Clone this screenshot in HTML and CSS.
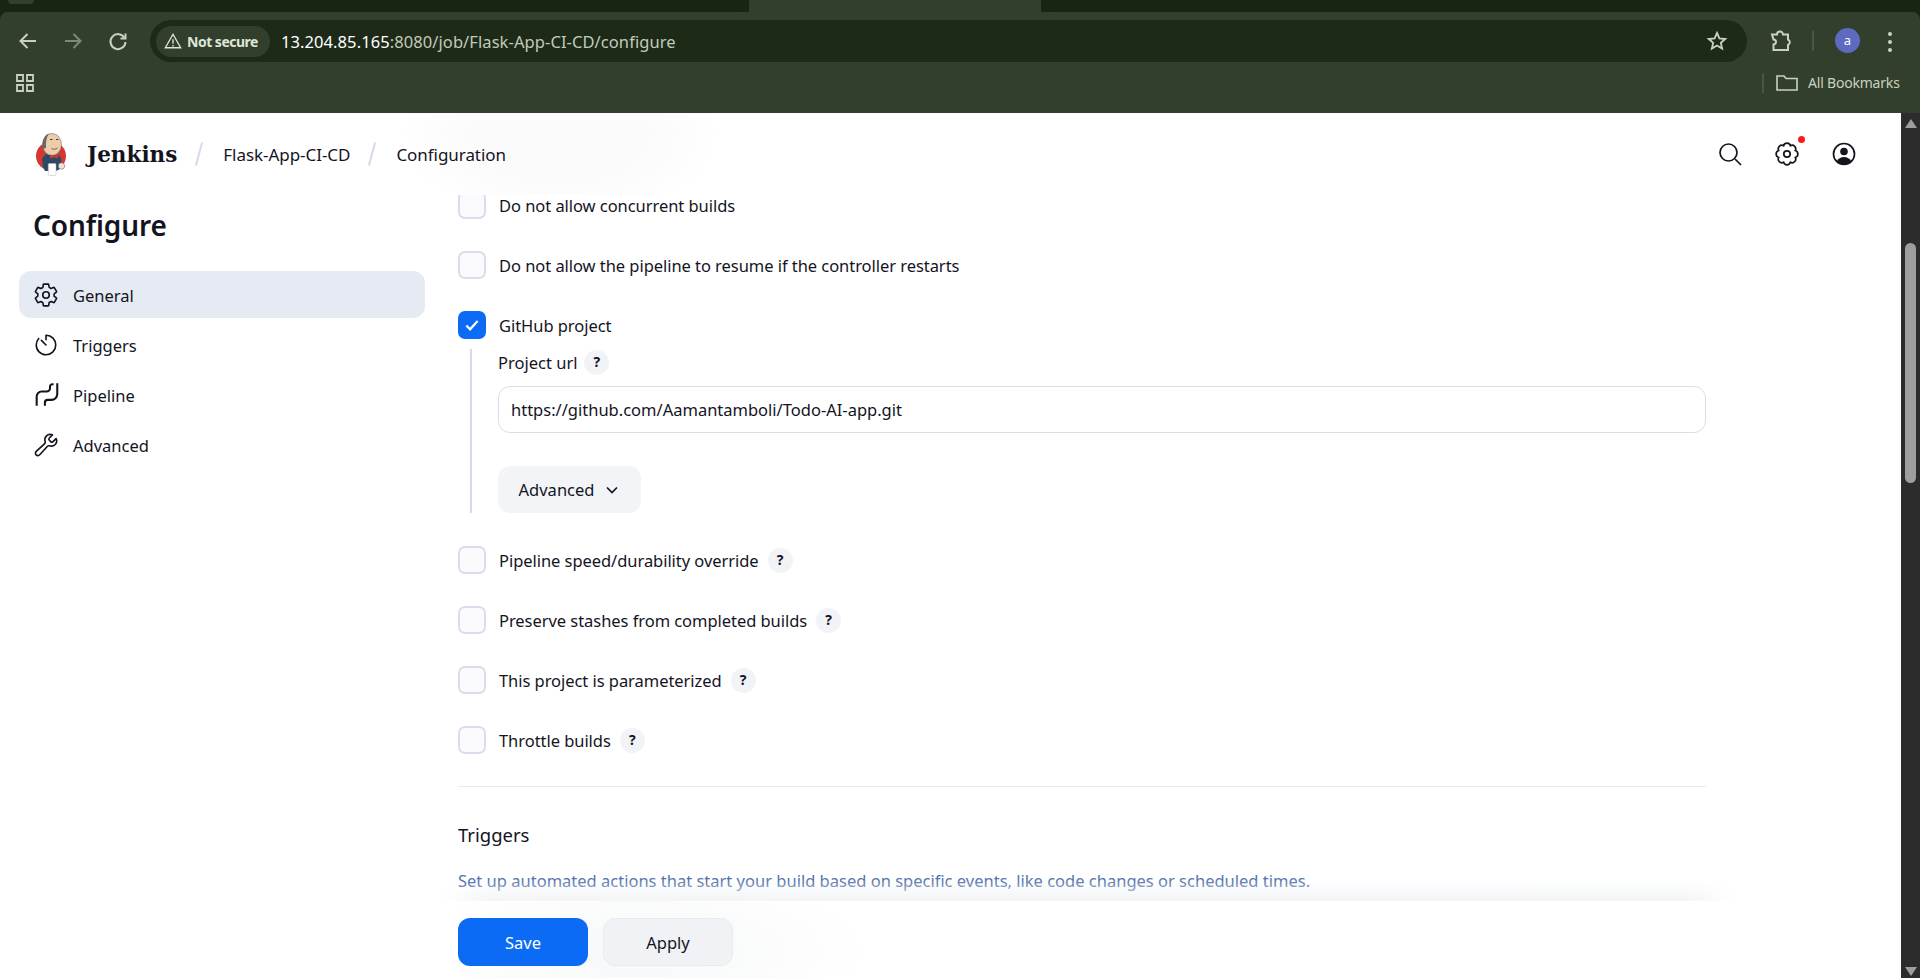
FILE: index.html
```html
<!DOCTYPE html>
<html lang="en">
<head>
    <meta charset="UTF-8">
    <meta name="viewport" content="width=device-width, initial-scale=1.0">
    <title>Flask-App-CI-CD Config [Jenkins]</title>
    <link rel="stylesheet" href="styles.css">
</head>
<body>
    <div class="window">
        <div class="tabstrip">
            <div class="tab-dark tab-left"><div class="tab-stub"></div></div>
            <div class="tab-active"></div>
            <div class="tab-dark tab-right"></div>
        </div>

        <div class="chrome">
            <div class="toolbar">
                <svg class="tool-icon" viewBox="0 0 24 24"><path d="M20 12H5M11.5 5L4.5 12l7 7"/></svg>
                <svg class="tool-icon dim" viewBox="0 0 24 24"><path d="M4 12h15M12.5 5l7 7-7 7"/></svg>
                <svg class="tool-icon" viewBox="0 0 24 24"><path d="M18.6 9A7.5 7.5 0 1 0 19.5 13"/><path d="M19.5 4.5V9.5H14.5"/></svg>
                <div class="omnibox">
                    <div class="secure-pill">
                        <svg class="warn-icon" viewBox="0 0 20 20"><path d="M10 2.5L18.5 17.5H1.5zM10 8v5M10 14.5v1.5"/></svg>
                        <span>Not secure</span>
                    </div>
                    <div class="url"><span class="url-host">13.204.85.165</span>:8080/job/Flask-App-CI-CD/configure</div>
                    <svg class="star-icon" viewBox="0 0 24 24"><path d="M12 3.2l2.6 6 6.4.6-4.8 4.2 1.4 6.3-5.6-3.3-5.6 3.3 1.4-6.3L3 9.8l6.4-.6z"/></svg>
                </div>
                <svg class="puzzle-icon" viewBox="0 0 24 24"><path d="M3 5.5h5a3 3 0 0 1 6 0h5v5a3 3 0 0 1 0 5.500v5H4.500v-5.500a2.500 2.500 0 0 0 0-5z"/></svg>
                <div class="tool-sep"></div>
                <div class="avatar">a</div>
                <div class="dots"><i></i><i></i><i></i></div>
            </div>
            <div class="bookmarks">
                <svg class="apps-icon" viewBox="0 0 18 18"><path d="M1 1h6v6H1zM11 1h6v6h-6zM1 11h6v6H1zM11 11h6v6h-6z"/></svg>
                <div class="tool-sep book-sep"></div>
                <svg class="folder-icon" viewBox="0 0 22 16"><path d="M1 1h7l2 2.500h11V15H1z"/></svg>
                <span class="all-bookmarks">All Bookmarks</span>
            </div>
        </div>

        <div class="viewport">
            <div class="page">
                <header class="app-bar">
                    <!-- Jenkins butler, simplified -->
                    <svg class="logo" viewBox="0 0 31 44">
                        <ellipse cx="16" cy="24" rx="15" ry="14.500" fill="#d33833"/>
                        <path d="M7 27c2-4 5-6 9-6s8 2 10 5l1 10-6 3H10l-2-4z" fill="#2c4a63"/>
                        <ellipse cx="17" cy="12.500" rx="9.500" ry="11" fill="#eccdab" stroke="#5a5560" stroke-width=".5"/>
                        <path d="M7.800 17C6.500 9 9.500 3 14 1.600 11.500 5 10.500 10 11 16z" fill="#6a666c"/>
                        <path d="M15 7.500h2.500M21 7.500h2.500" stroke="#4a3d38" stroke-width="1" fill="none"/>
                        <path d="M16.500 16.500c2 1 4 1 6-.5" stroke="#8c5a4a" stroke-width="1" fill="none"/>
                        <path d="M15 22.500l4 1.500 4-1.700v4l-4-1-4 1.200z" fill="#d33833"/>
                        <rect x="13.300" y="31.500" width="7.700" height="12" rx="1" fill="#fff" stroke="#bbb" stroke-width=".5"/>
                        <circle cx="26.500" cy="34" r="3.200" fill="#f4e3cf" stroke="#5a5560" stroke-width=".5"/>
                    </svg>
                    <span class="brand">Jenkins</span>
                    <span class="crumb-sep"></span>
                    <span class="crumb">Flask-App-CI-CD</span>
                    <span class="crumb-sep"></span>
                    <span class="crumb">Configuration</span>
                    <div class="app-actions">
                        <svg class="app-icon" viewBox="0 0 24 24"><circle cx="10.500" cy="10.500" r="8.500"/><path d="M17 17l6 6"/></svg>
                        <div class="gear-wrap">
                            <svg class="app-icon" viewBox="0 0 24 24"><circle cx="12" cy="12" r="3.200"/><path d="M15.440 3.690A3.600 3.600 0 0 1 20.310 8.560A3.600 3.600 0 0 1 20.310 15.440A3.600 3.600 0 0 1 15.440 20.310A3.600 3.600 0 0 1 8.560 20.310A3.600 3.600 0 0 1 3.690 15.440A3.600 3.600 0 0 1 3.690 8.560A3.600 3.600 0 0 1 8.560 3.690A3.600 3.600 0 0 1 15.440 3.690z"/></svg>
                            <span class="red-dot"></span>
                        </div>
                        <svg class="app-icon" viewBox="0 0 24 24"><circle cx="12" cy="12" r="10.500"/><circle class="solid" cx="12" cy="9.500" r="3.800"/><path class="solid" d="M4.500 19.500C6 16.500 9 15 12 15s6 1.500 7.500 4.500C17.500 21.500 15 22.500 12 22.500S6.500 21.500 4.500 19.500z"/></svg>
                    </div>
                </header>

                <div class="layout">
                    <aside class="sidebar">
                        <h1>Configure</h1>
                        <nav class="side-nav">
                            <a class="side-link active">
                                <svg class="side-icon" viewBox="0 0 512 512"><circle cx="256" cy="256" r="64"/><path d="M416.390 256a154.340 154.340 0 01-1.530 20.790l45.210 35.460a10.810 10.810 0 012.450 13.750l-42.770 74a10.810 10.810 0 01-13.140 4.590l-44.900-18.080a16.110 16.110 0 00-15.170 1.750A164.480 164.480 0 01325 400.800a15.940 15.940 0 00-8.820 12.140l-6.730 47.890a11.080 11.080 0 01-10.680 9.170h-85.540a11.110 11.110 0 01-10.690-8.870l-6.720-47.820a16.070 16.070 0 00-9-12.220 155.300 155.300 0 01-21.460-12.570 16 16 0 00-15.110-1.710l-44.890 18.070a10.810 10.810 0 01-13.140-4.580l-42.770-74a10.800 10.800 0 012.450-13.750l38.210-30a16.050 16.050 0 006-14.080c-.36-4.170-.58-8.330-.58-12.500s.21-8.270.58-12.350a16 16 0 00-6.070-13.940l-38.190-30A10.810 10.810 0 0149.480 186l42.770-74a10.810 10.810 0 0113.140-4.590l44.900 18.080a16.110 16.110 0 0015.170-1.750A164.480 164.480 0 01187 111.200a15.940 15.940 0 008.820-12.140l6.730-47.890A11.080 11.080 0 01213.230 42h85.540a11.110 11.110 0 0110.690 8.870l6.720 47.820a16.070 16.070 0 009 12.220 155.300 155.300 0 0121.460 12.570 16 16 0 0015.110 1.710l44.890-18.070a10.810 10.810 0 0113.140 4.580l42.770 74a10.800 10.800 0 01-2.450 13.750l-38.210 30a16.050 16.050 0 00-6.050 14.080c.33 4.140.55 8.300.55 12.470z"/></svg>
                                General
                            </a>
                            <a class="side-link">
                                <svg class="side-icon" viewBox="0 0 512 512"><path d="M112.910 128A191.850 191.850 0 0064 254c-1.180 106.350 85.650 193.800 192 194 106.200.2 192-85.830 192-192 0-104.540-83.550-189.610-187.500-192a4.360 4.360 0 00-4.500 4.370V152"/><path d="M165 165l91 91"/></svg>
                                Triggers
                            </a>
                            <a class="side-link">
                                <svg class="side-icon" viewBox="0 0 24 24"><path class="thin" d="M3.400 22V13.400A4.600 4.600 0 0 1 8 8.800H12.600A3.100 3.100 0 0 0 15.700 5.700V4.200A2.200 2.200 0 0 1 17.900 2H19"/><path class="thin" d="M11 22V19A2.500 2.500 0 0 1 13.500 16.500H17A5.400 5.400 0 0 0 22.400 11.100V1.200"/></svg>
                                Pipeline
                            </a>
                            <a class="side-link">
                                <svg class="side-icon" viewBox="0 0 512 512"><path d="M393.870 190a32.100 32.100 0 01-45.250 0l-26.570-26.570a32.090 32.090 0 010-45.260L382.190 58a1 1 0 00-.3-1.640c-38.820-16.640-89.150-8.160-121.110 23.570-30.580 30.350-32.320 76-21.120 115.840a31.930 31.930 0 01-9.060 32.080L64 380a48.170 48.170 0 1068 68l153.860-167a31.930 31.930 0 0131.600-9.130c39.540 10.590 84.540 8.600 114.720-21.190 32.490-32 39.500-88.560 23.750-120.930a1 1 0 00-1.600-.26z"/></svg>
                                Advanced
                            </a>
                        </nav>
                    </aside>

                    <main class="main">
                        <div class="form-scroll">
                            <div class="check-row first-row"><span class="checkbox"></span>Do not allow concurrent builds</div>
                            <div class="check-row"><span class="checkbox"></span>Do not allow the pipeline to resume if the controller restarts</div>
                            <div class="check-row github-row">
                                <span class="checkbox checked"><svg viewBox="0 0 16 16"><path d="M3 8.500l3.300 3.300L13 4.500"/></svg></span>GitHub project
                            </div>
                            <div class="nested">
                                <div class="field-label">Project url <span class="help">?</span></div>
                                <input class="text-input" type="text" value="https://github.com/Aamantamboli/Todo-AI-app.git">
                                <button class="btn-advanced">Advanced
                                    <svg viewBox="0 0 16 16"><path d="M3 5.500l5 5 5-5"/></svg>
                                </button>
                            </div>
                            <div class="check-row"><span class="checkbox"></span>Pipeline speed/durability override <span class="help">?</span></div>
                            <div class="check-row"><span class="checkbox"></span>Preserve stashes from completed builds <span class="help">?</span></div>
                            <div class="check-row"><span class="checkbox"></span>This project is parameterized <span class="help">?</span></div>
                            <div class="check-row"><span class="checkbox"></span>Throttle builds <span class="help">?</span></div>
                            <hr class="divider">
                            <h2 class="section-title">Triggers</h2>
                            <p class="section-desc">Set up automated actions that start your build based on specific events, like code changes or scheduled times.</p>
                        </div>
                        <div class="action-bar">
                            <button class="btn btn-save">Save</button>
                            <button class="btn btn-apply">Apply</button>
                        </div>
                    </main>
                </div>
            </div>

            <div class="scrollbar">
                <span class="arrow-up"></span>
                <span class="thumb"></span>
                <span class="arrow-down"></span>
            </div>
        </div>
    </div>
</body>
</html>
```

FILE: styles.css
```css
* { box-sizing: border-box; }
html, body {
    margin: 0;
    height: 100%;
    overflow: hidden;
}
body {
    font-family: "Noto Sans", "Open Sans", Arial, sans-serif;
    font-size: 16.5px;
    color: #14141f;
    background-color: #fff;
}
.window {
    height: 978px;
    display: flex;
    flex-direction: column;
    background-color: #182514;
}

/* browser chrome */
.tabstrip {
    height: 12px;
    display: flex;
    flex-shrink: 0;
}
.tab-dark { background-color: #182514; }
.tab-left {
    width: 749px;
    border-bottom-right-radius: 10px;
    padding-left: 8px;
}
.tab-right {
    flex: 1;
    border-bottom-left-radius: 10px;
}
.tab-active {
    width: 292px;
    background-color: #333f2d;
}
.tab-stub {
    width: 26px;
    height: 4px;
    background-color: #333f2d;
    border-radius: 0 0 8px 8px;
}
.chrome {
    height: 101px;
    flex-shrink: 0;
    background-color: #333f2d;
    border-radius: 8px 8px 0 0;
    color: #c9d2c0;
}
.toolbar {
    height: 58px;
    padding-top: 8px;
    display: flex;
    align-items: flex-start;
}
.tool-icon {
    width: 24px;
    height: 24px;
    margin: 9px 0 0 16px;
    fill: none;
    stroke: #c9d2c0;
    stroke-width: 2;
    flex-shrink: 0;
}
.tool-icon.dim { stroke: #7d8a75; margin-left: 21px; }
.tool-icon:nth-child(3) { margin-left: 21px; }
.omnibox {
    width: 1597px;
    height: 42px;
    margin-left: 20px;
    background-color: #1d2a18;
    border-radius: 21px;
    display: flex;
    align-items: center;
    padding-left: 6px;
    flex-shrink: 0;
}
.secure-pill {
    width: 114px;
    height: 31px;
    border-radius: 16px;
    background-color: #333f2d;
    display: flex;
    align-items: center;
    padding-left: 8px;
    gap: 5px;
    font-size: 14px;
    font-weight: 700;
    letter-spacing: -0.5px;
    color: #dfe5d8;
}
.warn-icon {
    width: 18px;
    height: 18px;
    fill: none;
    stroke: #dfe5d8;
    stroke-width: 1.5;
}
.url {
    margin-left: 11px;
    font-size: 16.5px;
    letter-spacing: 0.08px;
    color: #c2cbb9;
}
.url-host { color: #fff; }
.star-icon {
    width: 22px;
    height: 22px;
    margin-left: auto;
    margin-right: 19px;
    fill: none;
    stroke: #c9d2c0;
    stroke-width: 2;
}
.puzzle-icon {
    width: 24px;
    height: 24px;
    margin: 9px 0 0 22px;
    fill: none;
    stroke: #c9d2c0;
    stroke-width: 2;
    flex-shrink: 0;
}
.tool-sep {
    width: 2px;
    height: 20px;
    background-color: #4a5643;
    margin: 11px 0 0 19px;
    flex-shrink: 0;
}
.avatar {
    width: 25px;
    height: 25px;
    margin: 8px 0 0 21px;
    border-radius: 50%;
    background-color: #5c6bc0;
    color: #fff;
    font-size: 13px;
    line-height: 24px;
    text-align: center;
    flex-shrink: 0;
}
.dots {
    margin: 12px 0 0 28px;
    display: flex;
    flex-direction: column;
    gap: 4px;
}
.dots i {
    width: 4px;
    height: 4px;
    border-radius: 50%;
    background-color: #c9d2c0;
}
.bookmarks {
    height: 31px;
    display: flex;
    align-items: center;
    padding: 0 0 6px 16px;
    font-size: 14px;
}
.apps-icon {
    width: 18px;
    height: 18px;
    fill: none;
    stroke: #c9d2c0;
    stroke-width: 1.8;
    margin-right: auto;
}
.book-sep { margin: 0 12px 0 0; }
.folder-icon {
    width: 22px;
    height: 16px;
    fill: none;
    stroke: #c9d2c0;
    stroke-width: 1.6;
    margin-right: 10px;
}
.all-bookmarks {
    width: 112px;
    letter-spacing: -0.2px;
    white-space: nowrap;
}

/* page area */
.viewport {
    flex: 1;
    min-height: 0;
    display: flex;
    background-color: #fff;
}
.page {
    flex: 1;
    min-width: 0;
    display: flex;
    flex-direction: column;
}
.scrollbar {
    width: 19px;
    background-color: #2c2c2c;
    display: flex;
    flex-direction: column;
    align-items: center;
    padding: 6px 0 2px;
}
.arrow-up, .arrow-down {
    width: 0;
    height: 0;
    border-left: 6.500px solid transparent;
    border-right: 6.500px solid transparent;
}
.arrow-up { border-bottom: 9px solid #9e9e9e; }
.arrow-down { border-top: 9px solid #9e9e9e; margin-top: auto; }
.thumb {
    width: 11px;
    height: 240px;
    margin-top: 115px;
    border-radius: 6px;
    background-color: #9e9e9e;
}

/* jenkins header */
.app-bar {
    height: 82px;
    flex-shrink: 0;
    display: flex;
    align-items: center;
    padding-left: 35px;
    background: radial-gradient(ellipse 160px 90px at 560px 20px, #fbfbfc 60%, #fff 100%);
}
.logo {
    width: 31px;
    height: 44px;
    flex-shrink: 0;
}
.brand {
    margin-left: 21px;
    font-family: "DejaVu Serif", "Liberation Serif", serif;
    font-weight: 700;
    font-size: 21.5px;
    color: #14141f;
}
.crumb {
    font-size: 17px;
    letter-spacing: -0.05px;
}
.crumb-sep {
    width: 2px;
    height: 24px;
    margin: 0 23px 0 21px;
    background-color: #d3dbea;
    transform: rotate(15deg);
}
.app-actions {
    margin-left: auto;
    margin-right: 45px;
    display: flex;
    gap: 33px;
    align-items: center;
}
.app-icon {
    width: 24px;
    height: 24px;
    fill: none;
    stroke: #14141f;
    stroke-width: 1.7;
    display: block;
}
.app-icon .solid { fill: #14141f; stroke: none; }
.gear-wrap { position: relative; }
.red-dot {
    position: absolute;
    top: -6px;
    right: -6px;
    width: 7px;
    height: 7px;
    border-radius: 50%;
    background-color: #ff1a1a;
}

/* layout */
.layout {
    flex: 1;
    min-height: 0;
    display: flex;
}
.sidebar {
    width: 425px;
    padding-left: 19px;
    flex-shrink: 0;
}
.sidebar h1 {
    margin: 10px 0 26px 14px;
    font-size: 28px;
    line-height: 40px;
    font-weight: 600;
    letter-spacing: -0.1px;
}
.side-nav {
    display: flex;
    flex-direction: column;
    gap: 3px;
}
.side-link {
    height: 47px;
    display: flex;
    align-items: center;
    gap: 14px;
    padding: 1px 0 0 14px;
    border-radius: 12px;
}
.side-link.active { background-color: #e6eaf3; }
.side-icon {
    width: 26px;
    height: 26px;
    fill: none;
    stroke: #14141f;
    stroke-width: 32;
    stroke-linecap: round;
    stroke-linejoin: round;
    flex-shrink: 0;
}
.side-icon .thin { stroke-width: 1.900; stroke-linecap: butt; }

/* form */
.main {
    width: 1248px;
    margin-left: 33px;
    display: flex;
    flex-direction: column;
    min-height: 0;
}
.form-scroll {
    height: 706px;
    overflow: hidden;
}
.check-row {
    min-height: 28px;
    display: flex;
    align-items: center;
    margin-bottom: 32px;
    letter-spacing: -0.05px;
}
.first-row { margin-top: -4px; }
.github-row { margin-bottom: 10px; }
.checkbox {
    width: 28px;
    height: 28px;
    flex-shrink: 0;
    margin-right: 13px;
    border: 2px solid #d8deec;
    border-radius: 7px;
    background-color: #fbfbfd;
}
.checkbox.checked {
    background-color: #0b6bf5;
    border-color: #0b6bf5;
    padding: 3px;
}
.checkbox.checked svg {
    display: block;
    fill: none;
    stroke: #fff;
    stroke-width: 2;
}
.help {
    width: 25px;
    height: 25px;
    margin-left: 9px;
    flex-shrink: 0;
    border-radius: 50%;
    background-color: #f1f3f7;
    color: #14141f;
    font-size: 14px;
    font-weight: 700;
    line-height: 24px;
    text-align: center;
}
.nested {
    margin: 0 0 33px 12px;
    padding: 1px 0 0 26px;
    border-left: 2px solid #d3dbea;
    height: 164px;
}
.field-label {
    height: 25px;
    display: flex;
    align-items: center;
}
.field-label .help { margin-left: 7px; }
.text-input {
    display: block;
    width: 1208px;
    height: 47px;
    margin-top: 11px;
    padding: 0 12px;
    border: 1px solid #d8deec;
    border-radius: 12px;
    background-color: #fff;
    font-family: inherit;
    font-size: 16.5px;
    color: #14141f;
}
.btn-advanced {
    width: 143px;
    height: 47px;
    margin-top: 33px;
    display: flex;
    align-items: center;
    justify-content: center;
    gap: 10px;
    border: none;
    border-radius: 12px;
    background-color: #f2f4f8;
    font-family: inherit;
    font-size: 16.5px;
    color: #14141f;
}
.btn-advanced svg {
    width: 16px;
    height: 16px;
    fill: none;
    stroke: #14141f;
    stroke-width: 1.7;
}
.divider {
    margin: 0 0 36px;
    border: none;
    border-top: 1px solid #e6eaf3;
}
.section-title {
    margin: 0 0 23px;
    font-size: 18.5px;
    line-height: 24px;
    font-weight: 400;
}
.section-desc {
    margin: 0;
    line-height: 22px;
    color: #5474ad;
}
.action-bar {
    flex: 1;
    display: flex;
    gap: 15px;
    padding-top: 17px;
    position: relative;
    background: radial-gradient(ellipse 230px 80px at 180px 50px, #f8f9fa 20%, #fff 100%);
}
/* fade over the bottom of the form */
.action-bar::before {
    content: "";
    position: absolute;
    left: -18px;
    right: -30px;
    top: -22px;
    height: 22px;
    background: linear-gradient(rgba(240, 242, 246, 0), rgba(240, 242, 246, 0.8));
    -webkit-mask-image: linear-gradient(90deg, transparent, #000 4%, #000 96%, transparent);
    mask-image: linear-gradient(90deg, transparent, #000 4%, #000 96%, transparent);
}
.btn {
    width: 130px;
    height: 48px;
    border-radius: 12px;
    border: none;
    font-family: inherit;
    font-size: 16.5px;
}
.btn-save { background-color: #0b6bf5; color: #fff; }
.btn-apply {
    background-color: #f0f2f6;
    color: #14141f;
    border: 1px solid #e8ebf0;
}
```
